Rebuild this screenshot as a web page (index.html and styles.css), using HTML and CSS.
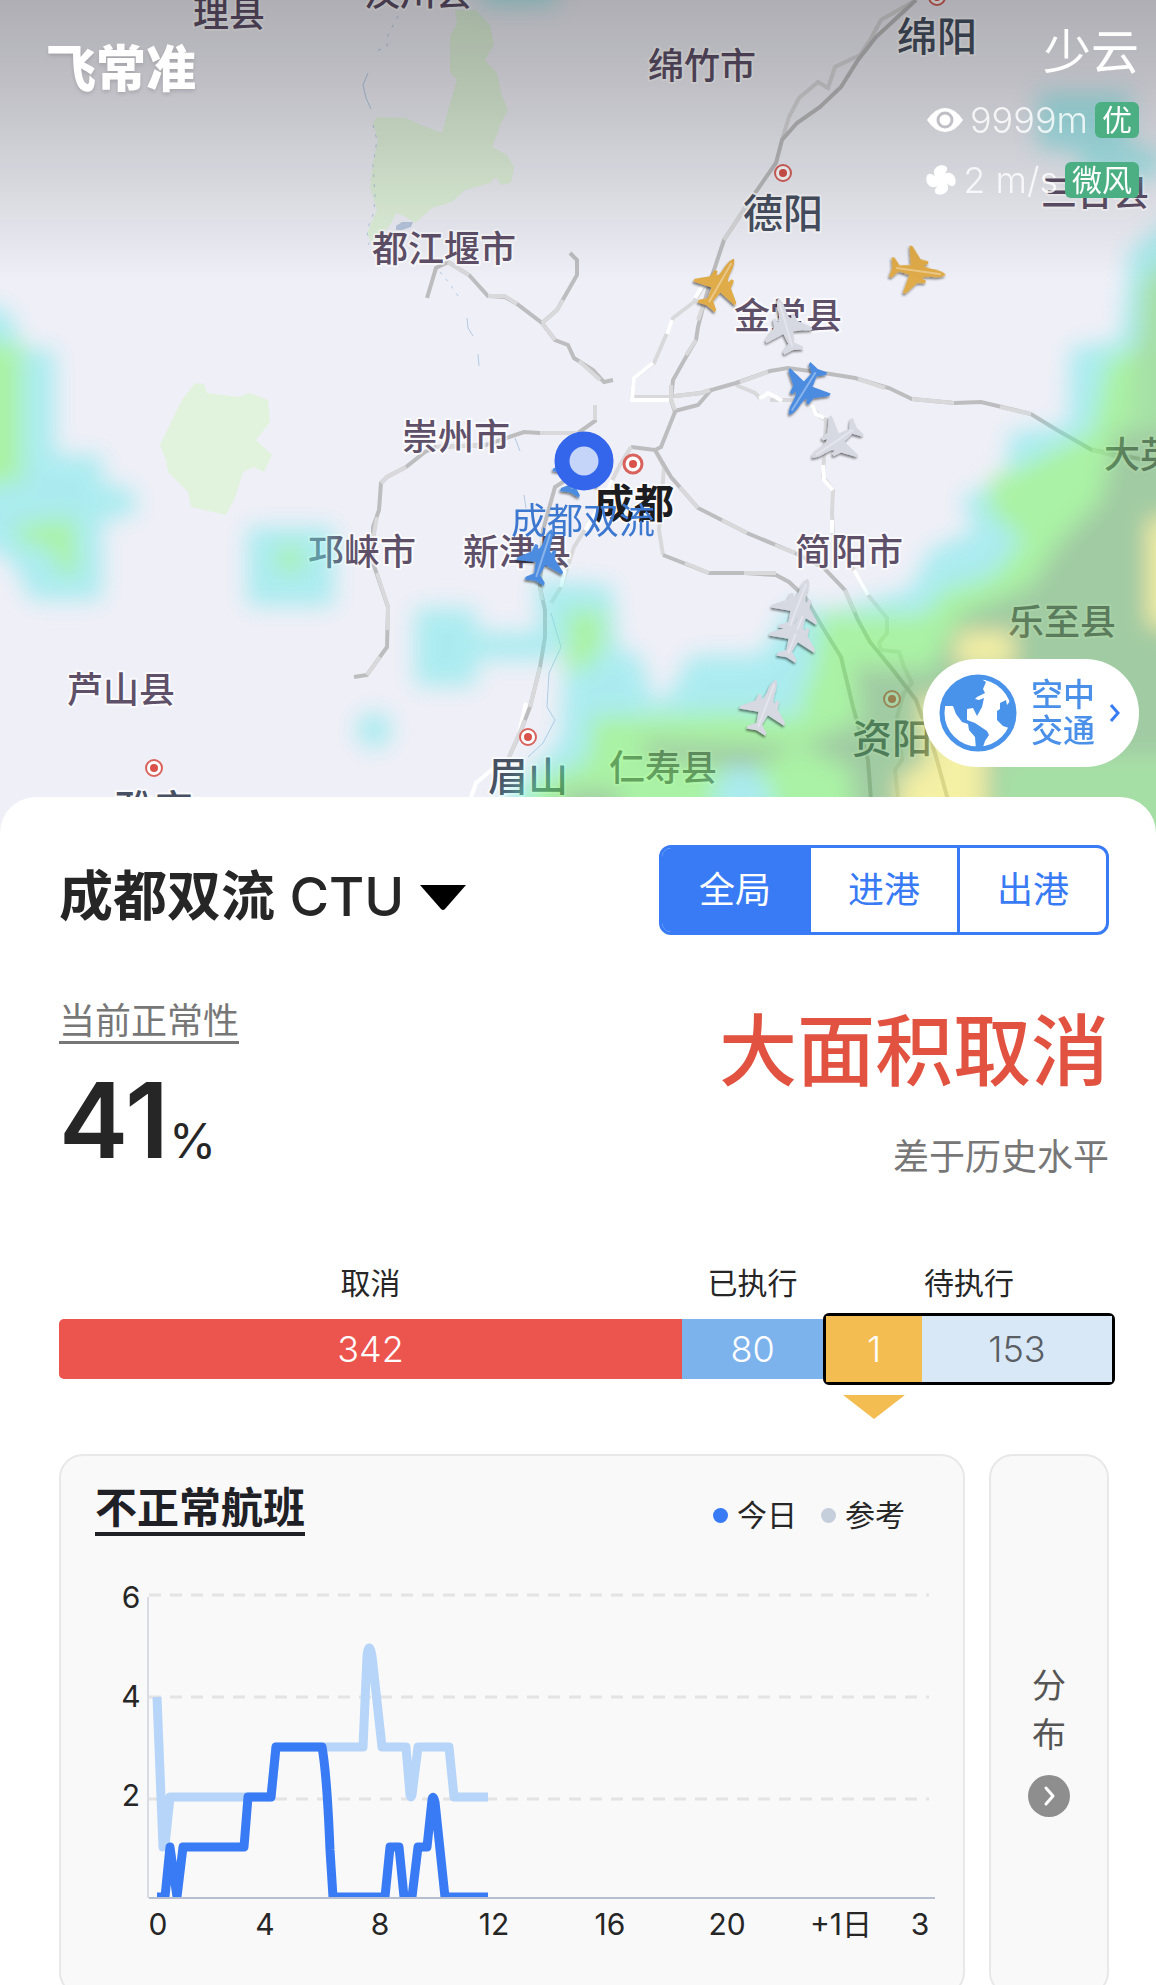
FILE: index.html
```html
<!DOCTYPE html>
<html lang="zh-CN">
<head>
<meta charset="utf-8">
<meta name="viewport" content="width=device-width, initial-scale=1">
<title>飞常准 - 成都双流 CTU</title>
<link rel="stylesheet" href="styles.css">
</head>
<body>
<div class="app">
  <header class="hero">
    <svg class="map" viewBox="0 0 1156 840" preserveAspectRatio="xMidYMin slice" role="img" aria-label="成都周边航班与天气地图">
      <defs>
        <linearGradient id="shade" x1="0" y1="0" x2="0" y2="1">
          <stop offset="0" stop-color="#000" stop-opacity=".27"/>
          <stop offset=".3" stop-color="#000" stop-opacity=".2"/>
          <stop offset="1" stop-color="#000" stop-opacity="0"/>
        </linearGradient>
        <filter id="soft" x="-10%" y="-10%" width="120%" height="120%"><feGaussianBlur stdDeviation="11"/></filter>
        <filter id="drop" x="-30%" y="-30%" width="160%" height="160%"><feDropShadow dx="-1" dy="2" stdDeviation="1" flood-opacity=".5"/></filter>
        <g id="plane">
          <path d="M0-28C3-25 4-19 4-13L5-7 7-5 8-9 11-9 12-1 24 9 24 12 5 8 3 19 10 25 10 28 0 26-10 28-10 25-3 19-5 8-24 12-24 9-12-1-11-9-8-9-7-5-5-7-4-13C-4-19-3-25 0-28Z"/>
          <path d="M0-23V22" stroke="#fff" stroke-opacity=".35" stroke-width="2"/>
        </g>
        <g id="city">
          <circle r="8" fill="#fff" stroke="#d9625c" stroke-width="2"/>
          <circle r="4" fill="#d9534c"/>
        </g>
      </defs>
      <rect width="1156" height="840" fill="#efeff7"/>
      <g fill="#e1f3dc">
        <path d="M455 10H476L490 25 494 45 485 60 497 73 501 93 508 110 501 123 496 137 492 147 507 155 514 167 511 183 501 185 496 177 490 183 465 190 452 202 432 208 415 223 406 217 396 213 392 222 373 247 367 233 377 210 370 187 373 163 378 140 373 123 377 117 406 118 421 125 442 133 448 110 457 80 450 72V37L457 23Z"/>
        <path d="M182 400 195 383 204 384 207 393 239 397 249 393 268 400 270 422 256 440 272 455 264 472 254 467 243 472 235 498 226 515 191 507 188 492 168 472 166 460 160 445Z"/>
      </g>
      <path d="M396 226 402 222 413 222 411 227 402 230 396 230Z" fill="#b9c8e0"/>
      <g class="river">
        <path stroke-dasharray="3 7" d="M398 16 388 35 387 47 376 51M373 125 377 140 373 165 375 195 374 212 367 230 369 245"/>
        <path d="M368 73 363 85 366 98 371 109"/>
        <path stroke-dasharray="3 6" d="M440 272 450 284 458 296"/>
        <path d="M467 318 468 328 473 336M478 354 479 366"/>
        <path d="M551 613 561 647 549 673 547 707 555 720 543 743 528 757M515 438 520 451M524 495 526 508"/>
      </g>
      <g class="road road-light">
        <path d="M703 287 694 302 673 318 667 333 654 363 634 378 632 397H667L675 396"/>
        <path d="M812 407 820 417 826 420 824 457 823 477 833 490 832 513 833 533 854 570 868 595"/>
        <path d="M631 447 620 465 597 510 574 547 561 587 551 603"/>
        <path d="M916 0 881 20 870 40 860 55 835 67 828 88 818 82 799 98 789 117 782 140"/>
        <path d="M736 385 755 393 761 399M770 400H800"/>
        <path d="M655 450 664 467 659 530 663 555"/>
        <path d="M868 595 887 618V633L879 643 881 650 899 652 904 667 912 683 904 693 897 717 902 760 895 770 898 797"/>
      </g>
      <g class="road road-white">
        <path d="M703 285 695 298M672 320 667 334M653 363 634 378 632 400H672"/>
        <path d="M759 398 763 397 768 393 774 396 782 401M812 405 816 414 824 418M823 465 824 480 833 490M832 520V533M854 570 868 595"/>
        <path d="M612 480 605 495M597 510 585 530M565 570 561 587M526 703 519 733M494 768 476 783 470 800"/>
      </g>
      <g class="road">
        <path d="M916 0 876 37 858 60 841 87 820 107 797 123 782 140 776 163 755 193 724 240 713 273 705 300 698 327 696 340 686 357 673 380 671 400 675 412 661 447 655 450 631 447"/>
        <path d="M675 396 701 393 736 383 770 371 788 368 824 373 855 378 889 388 912 399 954 403 981 402 1031 414 1057 430 1092 450 1130 457 1156 462"/>
        <path d="M711 390 698 405 675 411"/>
        <path d="M655 450 671 477 698 508 747 533 795 553 824 568 845 590 858 620 870 642 893 670 916 700 935 753 948 800"/>
        <path d="M663 555 709 573H744L776 575 789 582 805 597 820 623 841 657 853 707 868 760 871 800"/>
        <path d="M427 298 436 268 448 262 469 275 488 296 505 297 517 304 542 323 555 340 568 345 574 358 593 370 604 382 613 380"/>
        <path d="M542 323 557 310 577 275V260L570 253"/>
        <path d="M354 677 367 675 387 647 388 607 373 563V527L379 510 381 483 387 477 406 467 425 452 436 447 486 445 524 432 540 433H578L595 421V405"/>
        <path d="M566 480 555 487 543 530 540 587 545 610V637L540 667 530 707 520 733 509 757"/>
      </g>
      <g class="road road-light">
        <path d="M750 200 724 240M705 300 698 320M696 340 686 355M671 385V400L675 410M675 396 701 393 710 390M740 382 768 372M858 379 885 388M912 399 954 403M1000 407 1031 414M1092 450 1120 457"/>
        <path d="M680 487 698 508M722 520 747 533M775 545 795 553M845 590 855 612M685 563 709 573M744 573H776"/>
        <path d="M448 262 469 275M488 296H505L517 304M542 323 555 340M579 361 600 380M542 323 557 310 563 300"/>
        <path d="M367 675 380 657M436 447 486 445M540 433H578M595 420V405M381 483 387 477 406 467M388 630V607L377 573M373 540 377 517M540 587 542 600M540 667 530 707M525 720 509 757M631 447 620 465"/>
      </g>
      <g class="cities">
        <use href="#city" x="783" y="173"/><use href="#city" x="937" y="-3"/><use href="#city" x="528" y="737"/>
        <use href="#city" x="154" y="768"/><use href="#city" x="892" y="699"/>
        <circle cx="633" cy="464" r="9" fill="#fff" stroke="#d9625c" stroke-width="3"/><circle cx="633" cy="464" r="4" fill="#d9534c"/>
      </g>
      <g class="county">
        <text x="229" y="27">理县</text><text x="418" y="6">汶川县</text><text x="444" y="262">都江堰市</text>
        <text x="702" y="79">绵竹市</text><text x="1095" y="206">三台县</text><text x="788" y="329">金堂县</text>
        <text x="1158" y="468">大英县</text><text x="456" y="450">崇州市</text><text x="362" y="565">邛崃市</text>
        <text x="517" y="565">新津县</text><text x="849" y="565">简阳市</text><text x="1062" y="635">乐至县</text>
        <text x="121" y="703">芦山县</text><text x="663" y="781">仁寿县</text>
      </g>
      <g class="county city-name">
        <text x="937" y="51">绵阳</text><text x="783" y="228">德阳</text><text x="892" y="753">资阳</text>
        <text x="528" y="791">眉山</text><text x="154" y="824">雅安</text>
        <text class="capital" x="634" y="518">成都</text>
      </g>
      <g filter="url(#soft)" opacity=".5">
        <g fill="#69e9e9">
          <path d="M-30 300 10 312 22 348 55 350V455H102V483L135 490V515L102 520V600H30L15 565-30 535Z"/>
          <path d="M247 527H334V606H247ZM415 608H476V632H555V660H476V686H415ZM482-20H556V5H482Z"/>
          <circle cx="374" cy="730" r="18"/>
          <path d="M1038 92H1130V145L1160 150V178H1085L1075 150H1038Z"/>
          <path d="M1190 205 1130 250 1120 340 1070 348 1068 425 1010 432 1005 480 960 498 975 530 930 550 910 590 830 610 790 605 770 640 760 655 690 655 672 690 655 705 640 655 618 650 612 585 535 580 540 632 565 655 560 740 505 797V880H1190Z"/>
        </g>
        <g fill="#67f555">
          <path d="M-30 335 24 345V482L-30 490ZM15 523 76 516 80 575H58L50 550 20 545Z"/>
          <circle cx="290" cy="559" r="15"/>
          <path d="M565 608H606V650L585 672H565Z"/>
          <path d="M1190 270 1145 340 1105 360 1090 430 990 480 985 510 1020 540 990 575 940 590 925 612H820L810 675 800 690 800 715 740 710 590 715 585 760 530 780 520 880H715V790L740 755 770 790V880H1190Z"/>
        </g>
        <g fill="#57a951">
          <path d="M1190 420 1115 430 1100 500 1060 540 1030 585 960 615 930 670 855 665 860 720 800 745 640 740 650 760 750 770 800 745 850 770 860 880H1190Z"/>
          <path d="M560 790H620V860H560Z"/>
        </g>
        <path fill="#61d159" d="M1000 755H1190V880H990ZM1140 280 1190 240V420H1130Z"/>
        <path fill="#f9f153" d="M958 634H1012V665H958ZM920 700H985V880H900V780L930 760ZM1150 520H1190V625H1150Z"/>
      </g>
      <g filter="url(#drop)">
        <g fill="#e0ab48">
          <use href="#plane" transform="translate(720 283) rotate(30)"/>
          <use href="#plane" transform="translate(918 271) rotate(98)"/>
        </g>
        <g fill="#d6d8e2">
          <use href="#plane" transform="translate(786 325) rotate(-16)"/>
          <use href="#plane" transform="translate(835 442) rotate(236)"/>
          <use href="#plane" transform="translate(796 633) rotate(21)"/>
          <use href="#plane" transform="translate(798 605) rotate(21)"/>
          <use href="#plane" transform="translate(766 706) rotate(21)"/>
        </g>
        <g fill="#4b8ce0">
          <use href="#plane" transform="translate(804 391) rotate(212)"/>
          <use href="#plane" transform="translate(579 468) rotate(20)"/>
          <use href="#plane" transform="translate(543 556) rotate(18)"/>
        </g>
      </g>
      <circle cx="584" cy="461" r="22" fill="#c5d5f9" stroke="#3466ec" stroke-width="15"/>
      <text class="airport-name" x="583" y="534">成都双流</text>
      <rect width="1156" height="280" fill="url(#shade)"/>
    </svg>

    <div class="hero-bar">
      <strong class="logo">飞常准</strong>
      <div class="weather">
        <span class="weather-sky">少云</span>
        <div class="weather-row">
          <svg width="36" height="24" viewBox="0 0 36 24" aria-hidden="true"><path d="M0 12Q8 0 18 0T36 12Q28 24 18 24T0 12Z" fill="#fff"/><circle cx="18" cy="12" r="7" fill="#fff" stroke="#bfbfc5" stroke-width="3"/></svg>
          <span>9999m</span><b class="badge">优</b>
        </div>
        <div class="weather-row">
          <svg width="30" height="30" viewBox="-15 -15 30 30" aria-hidden="true"><g fill="#fff"><path id="blade" d="M2 3C-3 1-8-3-7-9-5-16 5-16 6-12 7-8 2-7 3-2Z"/><use href="#blade" transform="rotate(90)"/><use href="#blade" transform="rotate(180)"/><use href="#blade" transform="rotate(270)"/></g></svg>
          <span>2 m/s</span><b class="badge">微风</b>
        </div>
      </div>
    </div>

    <button class="traffic" type="button">
      <svg width="78" height="78" viewBox="0 0 78 78" aria-hidden="true">
        <circle cx="39" cy="39" r="36" fill="#fff" stroke="#4a93ea" stroke-width="5"/>
        <path fill="#4a93ea" d="M5 32 8 18 22 5 38 2 47 8 44 15 46 19 38 23 36 25 40 26 45 24 43 33 38 42 34 34 28 35 28 46 36 49 48 57 50 61 46 67 43 76 37 76 36 63 30 56 29 50 23 48 17 40 14 32ZM67 26 61 29 61 35 58 37 58 46 64 52 73 55 76 38 72 26 68 31Z"/>
      </svg>
      <span class="traffic-text">空中<br>交通</span>
      <svg width="12" height="18" viewBox="0 0 12 18" fill="none" stroke="#397bf5" stroke-width="3" aria-hidden="true"><path d="M2 1 9 9 2 17"/></svg>
    </button>
  </header>

  <main class="sheet">
    <div class="sheet-head">
      <h1 class="title"><button class="airport" type="button"><span><b>成都双流</b> CTU</span>
        <svg width="46" height="25" viewBox="0 0 46 25" aria-hidden="true"><path d="M0 0H46L25 24Q23 26 21 24Z"/></svg></button></h1>
      <div class="tabs" role="group" aria-label="范围">
        <button class="tab tab-on" type="button" aria-pressed="true">全局</button>
        <button class="tab" type="button" aria-pressed="false">进港</button>
        <button class="tab" type="button" aria-pressed="false">出港</button>
      </div>
    </div>

    <section class="summary">
      <div>
        <a class="metric-link" href="#normality">当前正常性</a>
        <p class="percent" id="normality">41<span>%</span></p>
      </div>
      <div class="verdict">
        <p class="verdict-main">大面积取消</p>
        <p class="verdict-sub">差于历史水平</p>
      </div>
    </section>

    <section class="status">
      <div class="status-col" style="flex-grow:623"><span class="status-label">取消</span><div class="bar bar-red">342</div></div>
      <div class="status-col" style="flex-grow:141"><span class="status-label">已执行</span><div class="bar bar-blue">80</div></div>
      <div class="status-col" style="flex-grow:292"><span class="status-label">待执行</span>
        <div class="pending"><div class="pending-late">1</div><div class="pending-rest">153</div></div>
      </div>
    </section>

    <div class="cards">
      <section class="card">
        <div class="card-head">
          <h2 class="card-title"><a href="#trend">不正常航班</a></h2>
          <ul class="legend"><li>今日</li><li class="legend-ref">参考</li></ul>
        </div>
        <svg class="chart" id="trend" viewBox="61 1560 902 400" role="img" aria-label="不正常航班趋势">
          <clipPath id="plot"><path d="M148 1580H935V1897H148Z"/></clipPath>
          <path d="M149 1595H929M149 1697H929M149 1799H929" stroke="#e4e4e4" stroke-width="3" stroke-dasharray="12 9"/>
          <path d="M148 1597V1898" stroke="#b8bfcc"/>
          <g fill="none" stroke-width="9" stroke-linejoin="round" clip-path="url(#plot)">
            <path stroke="#b6d5f9" d="M157 1697 163 1847 Q164 1847 165 1845L170 1797H271L276 1747H363L367 1656Q369 1640 372 1656L382 1747H406L410 1795Q411 1799 412 1795L418 1747H449L454 1797H488"/>
            <path stroke="#397bf5" d="M157 1897H165L170 1847 177 1897 183 1847H244L248 1797H271L276 1747H322Q327 1775 330 1850L333 1897H385L390 1847H399L404 1897H412L418 1847H427L432 1800Q433 1794 435 1802L445 1897H488"/>
          </g>
          <path d="M149 1898H935" stroke="#b5bfcf" stroke-width="2"/>
          <g class="tick">
            <text x="131" y="1608">6</text><text x="131" y="1707">4</text><text x="131" y="1806">2</text>
            <text x="158" y="1935">0</text><text x="265" y="1935">4</text><text x="380" y="1935">8</text>
            <text x="494" y="1935">12</text><text x="610" y="1935">16</text><text x="727" y="1935">20</text>
            <text x="841" y="1935">+1日</text><text x="920" y="1935">3</text>
          </g>
        </svg>
      </section>
      <button class="card spread" type="button">
        <span class="spread-text">分<br>布</span>
        <svg width="42" height="42" viewBox="0 0 42 42" fill="none" aria-hidden="true"><circle cx="21" cy="21" r="21" fill="#8e8e8e"/><path d="M18 13 25 21 18 29" stroke="#fff" stroke-width="3" stroke-linecap="round" stroke-linejoin="round"/></svg>
      </button>
    </div>
  </main>
</div>
</body>
</html>
```
FILE: styles.css
```css
* { box-sizing: border-box; }
body, h1, h2, p, ul { margin: 0; padding: 0; }
body {
  background: #fff;
  color: #262626;
  font-family: Inter, "Noto Sans CJK SC", sans-serif;
}
button { font: inherit; color: inherit; background: none; border: 0; padding: 0; }
a { color: inherit; text-decoration: none; }
svg { display: block; flex: none; }

.app { height: 100vh; overflow-y: auto; scrollbar-width: none; }

/* Map */
.hero { position: relative; aspect-ratio: 1156 / 840; margin-bottom: -43px; overflow: hidden; }
.map { width: 100%; height: 100%; }
.road { fill: none; stroke: #bdbdbf; stroke-width: 4; }
.road-light { stroke: #d9d9db; }
.road-white { stroke: #fff; }
.river { fill: none; stroke: #b4cbe4; stroke-width: 1; }
.county {
  fill: #5f5069;
  font-size: 36px;
  font-weight: 500;
  text-anchor: middle;
  stroke: #fff;
  stroke-opacity: .7;
  stroke-width: 4px;
  stroke-linejoin: round;
  paint-order: stroke;
}
.city-name { fill: #475062; font-size: 40px; }
.capital { fill: #1c1c20; font-weight: 700; }
.airport-name { fill: #3c78cf; font-size: 36px; text-anchor: middle; }

.hero-bar {
  position: absolute;
  inset: 0 17px auto 46px;
  display: flex;
  justify-content: space-between;
  color: #fff;
}
.logo { margin-top: 39px; font-size: 50px; line-height: 60px; font-weight: 900; text-shadow: 0 2px 4px rgba(0, 0, 0, .15); }
.weather { display: flex; flex-direction: column; align-items: flex-end; }
.weather-sky { margin-top: 22px; font-size: 48px; line-height: 60px; font-weight: 400; }
.weather-row { display: flex; align-items: center; gap: 7px; height: 36px; margin-top: 20px; font-size: 36px; font-weight: 300; color: rgba(255, 255, 255, .8); }
.weather-row + .weather-row { margin-top: 24px; }
.badge { padding: 0 7px; border-radius: 6px; background: #4caf84; color: #fff; font-size: 30px; line-height: 36px; font-weight: 400; }

.traffic {
  position: absolute;
  right: 17px;
  bottom: 73px;
  display: flex;
  align-items: center;
  gap: 14px;
  width: 216px;
  height: 108px;
  padding: 0 0 0 16px;
  border-radius: 54px;
  background: #fff;
  color: #4a90e8;
}
.traffic-text { font-size: 32px; line-height: 36px; font-weight: 500; }

/* Sheet */
.sheet { position: relative; padding: 48px 47px 0 59px; border-radius: 36px 36px 0 0; background: #fff; }
.sheet-head { display: flex; justify-content: space-between; align-items: flex-end; }
.title { font-size: 54px; line-height: 76px; font-weight: 500; }
.airport { display: flex; align-items: center; gap: 16px; color: #262626; }
.tabs { display: flex; width: 450px; height: 90px; border: 3px solid #397bf5; border-radius: 12px; overflow: hidden; }
.tab { flex: 1; font-size: 36px; line-height: 80px; color: #397bf5; }
.tab + .tab { border-left: 3px solid #397bf5; }
.tab-on { background: #397bf5; color: #fff; }

.summary { display: flex; justify-content: space-between; margin-top: 66px; }
.metric-link { display: inline-block; border-bottom: 3px solid #777; color: #777; font-size: 36px; line-height: 40px; vertical-align: top; }
.percent { margin-top: 26px; font-size: 104px; line-height: 100px; font-weight: 600; }
.percent span { font-size: 48px; line-height: 48px; font-weight: 400; }
.verdict { padding-top: 6px; text-align: right; }
.verdict-main { color: #e15241; font-size: 78px; line-height: 90px; font-weight: 500; }
.verdict-sub { margin-top: 40px; color: #777; font-size: 36px; line-height: 40px; }

.status { display: flex; margin: 86px -6px 0 0; text-align: center; }
.status-col { flex: 1 1 0; display: flex; flex-direction: column; }
.status-label { margin-bottom: 10px; font-size: 30px; line-height: 40px; }
.bar { margin: 6px 0; color: #fff; font-size: 36px; line-height: 60px; font-weight: 300; }
.bar-red { border-radius: 5px 0 0 5px; background: #ec544e; }
.bar-blue { background: #7db3ed; }
.pending { display: flex; height: 72px; border: 3px solid #000; border-radius: 6px; font-size: 36px; line-height: 66px; font-weight: 300; }
.pending-late { position: relative; flex: 96; background: #f4bd52; color: #fff; }
.pending-late::after {
  content: "";
  position: absolute;
  top: 79px;
  left: 50%;
  width: 62px;
  height: 24px;
  margin-left: -31px;
  background: #f4bd52;
  clip-path: polygon(0 0, 100% 0, 50% 100%);
}
.pending-rest { flex: 190; background: #d9e8f6; color: #595e64; }

/* Cards */
.cards { display: flex; gap: 24px; margin-top: 69px; }
.card { flex: 1; padding: 28px 0 34px; border: 2px solid #e8e8e8; border-radius: 24px; background: #f9f9f9; }
.card-head { display: flex; justify-content: space-between; align-items: flex-end; padding: 0 58px 0 34px; }
.card-title { border-bottom: 4px solid #1f2126; color: #1f2126; font-size: 42px; line-height: 48px; font-weight: 700; }
.legend { display: flex; gap: 24px; list-style: none; font-size: 30px; line-height: 42px; }
.legend li { display: flex; align-items: center; gap: 9px; }
.legend li::before { content: ""; width: 15px; height: 15px; border-radius: 50%; background: #397bf5; }
.legend .legend-ref::before { background: #c5cfdb; }
.chart { width: 100%; margin-top: 24px; }
.tick { fill: #262626; font-size: 30px; text-anchor: middle; }
.spread { flex: 0 0 120px; display: flex; flex-direction: column; align-items: center; justify-content: center; gap: 16px; padding: 62px 0 34px; color: #555; }
.spread-text { font-size: 34px; line-height: 49px; }
```
